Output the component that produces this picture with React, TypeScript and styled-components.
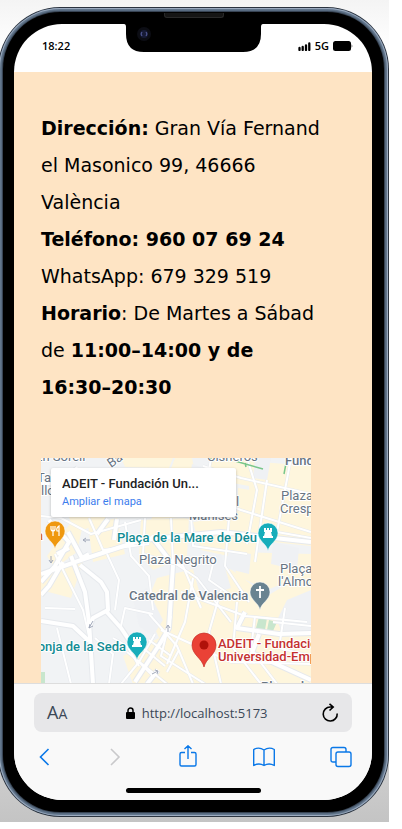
import React from 'react';
import styled, { createGlobalStyle } from 'styled-components';

const GlobalStyle = createGlobalStyle`
  *, *::before, *::after { box-sizing: border-box; }
  body { margin: 0; background: #fff; overflow: hidden; }
`;

const uiFont = `'Open Sans', 'Noto Sans', sans-serif`;

const Stage = styled.div`
  display: flex;
  height: calc(100vh - 7px);
  margin-right: 13px;
  padding: 7px 0 5px;
  overflow: hidden;
  background: linear-gradient(#f4f4f4 0, #fdfdfd 40px, #fff 120px, #fff 500px, #c4c4c4 100%);
`;

const Phone = styled.div`
  display: flex;
  flex: 1;
  min-width: 0;
  margin-left: -2px;
  padding: 1px;
  border-radius: 62px;
  background: #2b3440;
`;

const Chrome = styled.div`
  display: flex;
  flex: 1;
  min-width: 0;
  padding: 4px;
  border-radius: 61px;
  background: #5d7187;
  box-shadow: inset 0 0 1px 1px #a3b2c7;
`;

const Bezel = styled.div`
  position: relative;
  display: flex;
  flex: 1;
  min-width: 0;
  padding: 12px 12px 12px 11px;
  border-radius: 57px;
  background: #000;
  box-shadow: 0 0 1px 1px #35404f;
`;

const Screen = styled.div`
  display: flex;
  flex: 1;
  flex-direction: column;
  min-width: 0;
  overflow: hidden;
  border-radius: 48px;
  background: #fff;
`;

const Speaker = styled.div`
  position: absolute;
  top: 1px;
  left: 50%;
  width: 60px;
  height: 5px;
  margin-left: -30px;
  border: 1px solid #292929;
  border-top: 0;
  border-radius: 0 0 3px 3px;
  background: #151515;
`;

const StatusBar = styled.header`
  display: grid;
  grid-template-columns: 1fr 139px 1fr;
  flex: none;
  height: 48px;
  font: 600 11px/44px ${uiFont};
  color: #000;
`;

const Clock = styled.time`
  padding-left: 28px;
`;

const Notch = styled.svg`
  display: block;
  width: 139px;
  height: 28px;
`;

const Signals = styled.div`
  display: flex;
  align-items: center;
  justify-content: flex-end;
  gap: 4px;
  height: 44px;
  padding-right: 19px;
`;

const Page = styled.main`
  display: flex;
  flex: 1;
  flex-direction: column;
  min-height: 0;
  padding: 38px 61px 0 27px;
  overflow: hidden;
  background: #fee4c4;
`;

const Contact = styled.address`
  flex: none;
  font: normal 19px/37px Verdana, 'DejaVu Sans', sans-serif;
  color: #000;
  white-space: nowrap;
`;

const Line = styled.div``;

const MapPanel = styled.section`
  position: relative;
  flex: 1;
  min-height: 0;
  margin-top: 52px;
  overflow: hidden;
  background: #f2f3f5;
`;

const MapDrawing = styled.svg`
  display: block;
  width: 100%;
  height: 100%;
  font-family: Roboto, sans-serif;
`;

const MapCard = styled.div`
  position: absolute;
  top: 10px;
  left: 10px;
  width: 185px;
  height: 49px;
  padding: 7px 11px;
  border-radius: 2px;
  background: #fff;
  box-shadow: 0 1px 3px rgba(0, 0, 0, 0.25);
  font-family: Roboto, sans-serif;
`;

const CardTitle = styled.div`
  overflow: hidden;
  font-size: 13px;
  font-weight: 500;
  line-height: 18px;
  color: #222;
  white-space: nowrap;
`;

const CardLink = styled.a`
  display: block;
  font-size: 11px;
  line-height: 17px;
  color: #3b7ded;
  text-decoration: none;
`;

const BrowserBar = styled.footer`
  flex: none;
  padding: 9px 20px 7px;
  border-top: 1px solid #ddd;
  background: #f9f9f9;
`;

const AddressBar = styled.div`
  display: flex;
  align-items: center;
  height: 39px;
  padding: 0 13px;
  border-radius: 8px;
  background: #e7e7e9;
  color: #2b3645;
`;

const IconButton = styled.button`
  display: flex;
  align-items: center;
  justify-content: center;
  height: 26px;
  padding: 0;
  border: 0;
  background: none;
  color: #0a78e8;
  &:disabled { color: #c9c9cb; }
`;

const TextSize = styled.button`
  display: flex;
  align-items: baseline;
  padding: 0;
  border: 0;
  background: none;
  font: 400 18px/26px ${uiFont};
  color: #3b4757;
`;

const Small = styled.span`
  font-size: 14px;
`;

const Url = styled.a`
  display: flex;
  flex: 1;
  align-items: center;
  justify-content: center;
  gap: 7px;
  padding-left: 4px;
  font: 400 13px/26px ${uiFont};
  color: #3b4757;
  text-decoration: none;
`;

const Reload = styled(IconButton)`
  color: #000;
`;

const Nav = styled.nav`
  display: flex;
  justify-content: space-between;
  padding: 12px 0 0 2px;
`;

const HomeIndicator = styled.div`
  width: 135px;
  height: 5px;
  margin: 18px auto 0;
  border-radius: 3px;
  background: #000;
`;

const blocks = [
  'M24 48L68 44 64 62 34 76Z', 'M6 98L30 64 42 66 36 94 14 110Z', 'M47 67L76 60 84 96 52 104Z',
  'M80 0L132 0 128 10 84 9Z', 'M134 0L151 0 160 44 147 58 110 62Z',
  'M170 0L270 8V88L210 82 208 28 164 20Z', 'M197 30L222 34 214 104 160 92 152 64 196 58Z',
  'M100 62L148 60 146 98 112 112 98 96Z', 'M116 120L180 104 226 138 270 112V226H92L82 198 118 180 104 148Z',
  'M12 110L42 104 30 140 0 132V116Z', 'M188 94L270 96V114L226 132 196 118Z',
];
const greys = [
  'M151 6L174 14 166 42 155 62 142 60Z', 'M188 92L210 96 208 116 184 110Z',
  'M150 104L180 96 190 130 160 140Z', 'M246 142L270 132V178H242L236 162Z', 'M92 140L106 130 122 162 112 178 98 168Z',
  'M214 0L230 0 226 22 212 20Z', 'M232 84L258 90 256 112 230 106Z',
];
const streets = [
  'M0 58L20 60 50 76 100 62', 'M48 60L62 92 108 86', 'M14 96L42 152 48 178', 'M84 64L90 98 108 118 112 152',
  'M104 60L102 96 142 108 160 150', 'M130 60L132 104 156 120 190 164', 'M150 58L152 88 206 96',
  'M170 0L164 38 200 52 270 74', 'M206 0L216 32 206 86', 'M162 8L200 20 270 36', 'M226 22L214 104',
  'M188 60L184 108 208 144', 'M250 0L236 74 270 80', 'M66 96L78 122 74 152', 'M4 150L34 151',
  'M80 168L84 150 112 156', 'M108 156L136 188 152 226', 'M114 176L98 204 80 226', 'M120 172L190 204 270 206',
  'M140 134L204 158 266 164', 'M152 120L144 164 126 206', 'M180 132L168 174 180 226', 'M196 144L192 190 220 226',
  'M214 158L210 192 236 226', 'M244 150L238 190 270 198', 'M232 164L270 168', 'M130 158L120 198 164 226',
  'M54 180L72 196 68 226', 'M72 180L86 188 98 208', 'M16 170L30 226', 'M86 194L106 210 126 226', 'M174 98L168 122 194 140',
  'M108 182L130 198M102 190L124 208M96 202L112 218M138 192L126 214',
];
const avenues = [
  'M0 116L40 102 101 82 180 74 270 84', 'M8 62L28 84 14 108 0 124', 'M37 10L14 26 0 24',
  'M28 90L16 96M27 74L41 100 48 96', 'M22 104L8 128 0 137', 'M30 98L44 134 48 164 52 226',
  'M39 107L60 124 66 134 67 152 52 160 48 170', 'M0 163L32 168 48 183', 'M64 152L80 170 96 194',
  'M132 107L128 170 120 184 94 224', 'M110 78L130 104M67 61L56 76M76 61L73 82',
  'M117 212L106 226', 'M204 154L196 170 238 176 270 175', 'M218 176L211 195 270 222',
];

type PinProps = { x: number; y: number; color: string; children?: React.ReactNode };
const Pin = ({ x, y, color, children }: PinProps) => (
  <g transform={`translate(${x} ${y})`}>
    <path d="M0 18C-1 11-10 8-10 0A10 10 0 0 1 10 0C10 8 1 11 0 18Z" fill={color} stroke="#fff" strokeWidth=".5" />
    {children}
  </g>
);
const Rook = () => (
  <path d="M-4-5H-2V-3H-1V-5H1V-3H2V-5H4V-1H3L4 3H5V5H-5V3H-4L-3-1H-4Z" fill="#fff" />
);

const CityMap = () => (
  <MapDrawing viewBox="0 0 270 226" preserveAspectRatio="xMinYMin slice" role="img" aria-label="Mapa de Valencia">
    <rect width="270" height="226" fill="#f1f3f5" />
    <g fill="#fef6dd">{blocks.map((d) => <path key={d} d={d} />)}</g>
    <g fill="#eff1f4">{greys.map((d) => <path key={d} d={d} />)}</g>
    <path d="M218 159L226 160 224 172 215 170ZM228 162L236 164 232 173 226 172ZM0 214H4V226H0ZM181 72L186 74 184 80 180 78Z" fill="#c8e6cd" />
    <g fill="none" stroke="#e6e9ed" strokeLinejoin="round">
      {streets.map((d) => <path key={d} d={d} strokeWidth="3" />)}
      {avenues.map((d) => <path key={d} d={d} strokeWidth="6" />)}
    </g>
    <g fill="none" stroke="#fff" strokeLinejoin="round">
      {streets.map((d) => <path key={d} d={d} strokeWidth="2" />)}
      {avenues.map((d) => <path key={d} d={d} strokeWidth="4" />)}
    </g>
    <path d="M194 3L222 11M204 5L205 9M246 0L243 16M170 0L169 3" fill="none" stroke="#79c68b" strokeWidth="1.5" />
    <g fill="none" stroke="#a2a9ba" strokeWidth="1">
      <path d="M42 82H49M42 82L45 80M42 82L45 84M10 98V105M10 105L8 102M10 105L12 102M52 163L48 170M49 166L48 170 52 168M127 174V167L125 170M127 167L129 170M111 216L117 213 114 212M117 213L116 216" />
    </g>
    <g stroke="#fff" strokeWidth="2" paintOrder="stroke" strokeLinejoin="round" fontSize="13" fill="#687583">
      <text x="-6" y="3">En Sorell</text>
      <text x="166" y="3">Cisneros</text>
      <text x="244" y="7" fontWeight="500">Fundación</text>
      <text x="70" y="10" transform="rotate(-35 70 10)">Ba</text>
      <text x="-4" y="24">Tav</text>
      <text x="0" y="37">llop</text>
      <text x="240" y="42">Plaza</text>
      <text x="239" y="55">Crespins</text>
      <text x="148" y="62">Manises</text>
      <text x="195" y="48">l</text>
      <text x="98" y="106">Plaza Negrito</text>
      <text x="239" y="115">Plaça de</text>
      <text x="237" y="128">l'Almoina</text>
      <text x="88" y="142" fontWeight="500">Catedral de Valencia</text>
      <text x="220" y="233" fontWeight="500">Plaça de</text>
      <g fill="#118b93" fontWeight="500">
        <text x="76" y="84">Plaça de la Mare de Déu</text>
        <text x="85" y="193" textAnchor="end">Lonja de la Seda</text>
      </g>
      <text x="-5" y="82" fill="#d66a20" fontWeight="500">a</text>
      <g fill="#c5312f" fontWeight="500">
        <text x="177" y="190">ADEIT - Fundación</text>
        <text x="177" y="203">Universidad-Empresa</text>
      </g>
    </g>
    <Pin x={14} y={73} color="#ef980f">
      <path d="M-4-5V-2Q-4 0-2 0V5M0-5V-2Q0 0-2 0M-2-5V0M4 5V-5Q1-3 2 0H4" fill="none" stroke="#fff" strokeWidth="1.2" />
    </Pin>
    <Pin x={227} y={75} color="#17adba"><Rook /></Pin>
    <Pin x={96} y={184} color="#17adba"><Rook /></Pin>
    <Pin x={219} y={134} color="#698391">
      <path d="M0-6V6M-4-2H4" stroke="#fff" strokeWidth="1.8" />
    </Pin>
    <path d="M163 209C161 200 151 197 151 187A12 12 0 0 1 175 187C175 197 165 200 163 209Z" fill="#ea4236" stroke="#c5302b" strokeWidth=".7" />
    <circle cx="163" cy="187" r="4.5" fill="#b0120a" />
  </MapDrawing>
);

export default function App() {
  return (
    <>
      <GlobalStyle />
      <Stage>
        <Phone>
          <Chrome>
            <Bezel>
              <Speaker />
              <Screen>
                <StatusBar>
                  <Clock>18:22</Clock>
                  <Notch viewBox="0 0 139 28" aria-hidden="true">
                    <path d="M0 0Q2 0 2 3V10Q2 28 20 28H119Q137 28 137 10V3Q137 0 139 0Z" />
                    <circle cx="20" cy="10" r="7" fill="#0c0d14" />
                    <circle cx="20" cy="10" r="4" fill="#171b36" />
                    <path d="M18 8Q16 10 18 12M22 8Q24 10 22 12" fill="none" stroke="#5960a0" />
                  </Notch>
                  <Signals>
                    <svg width="13" height="9" viewBox="0 0 13 9" aria-hidden="true">
                      <path d="M1.5 8V6M4.7 8V5M8 8V3.500M11.300 8V1.500" stroke="#000" strokeWidth="2.300" strokeLinecap="round" />
                    </svg>
                    <span>5G</span>
                    <svg width="20" height="10" viewBox="0 0 20 10" aria-hidden="true">
                      <rect width="18" height="10" rx="2.500" />
                      <path d="M18.700 3Q20 5 18.700 7Z" />
                    </svg>
                  </Signals>
                </StatusBar>
                <Page>
                  <Contact>
                    <Line><b>Dirección:</b> Gran Vía Fernand</Line>
                    <Line>el Masonico 99, 46666</Line>
                    <Line>València</Line>
                    <Line><b>Teléfono: 960 07 69 24</b></Line>
                    <Line>WhatsApp: 679 329 519</Line>
                    <Line><b>Horario</b>: De Martes a Sábad</Line>
                    <Line>de <b>11:00–14:00 y de</b></Line>
                    <Line><b>16:30–20:30</b></Line>
                  </Contact>
                  <MapPanel>
                    <CityMap />
                    <MapCard>
                      <CardTitle>ADEIT - Fundación Un...</CardTitle>
                      <CardLink href="#mapa">Ampliar el mapa</CardLink>
                    </MapCard>
                  </MapPanel>
                </Page>
                <BrowserBar>
                  <AddressBar>
                    <TextSize type="button">A<Small>A</Small></TextSize>
                    <Url href="http://localhost:5173">
                      <svg width="9" height="12" viewBox="0 0 9 12" aria-hidden="true">
                        <rect y="5" width="9" height="7" rx="1" />
                        <path d="M2 6V3.500a2.500 2.500 0 0 1 5 0V6" fill="none" stroke="#000" strokeWidth="1.500" />
                      </svg>
                      http://localhost:5173
                    </Url>
                    <Reload type="button" aria-label="Recargar">
                      <svg width="17" height="20" viewBox="0 0 17 20" fill="none" stroke="currentColor" strokeWidth="1.600">
                        <path d="M15.200 10.500A7 7 0 1 1 8.200 4H11M7.500.800L11.200 4 7.500 7.500" />
                      </svg>
                    </Reload>
                  </AddressBar>
                  <Nav>
                    <IconButton type="button" aria-label="Atrás">
                      <svg width="16" height="22" viewBox="3 0 16 22" fill="none" stroke="currentColor" strokeWidth="1.600"><path d="M15.500 3L7.500 11L15.500 19" /></svg>
                    </IconButton>
                    <IconButton type="button" aria-label="Adelante" disabled>
                      <svg width="16" height="22" viewBox="3 0 16 22" fill="none" stroke="currentColor" strokeWidth="1.600"><path d="M7 3L15 11L7 19" /></svg>
                    </IconButton>
                    <IconButton type="button" aria-label="Compartir">
                      <svg width="20" height="24" viewBox="0 0 20 24" fill="none" stroke="currentColor" strokeWidth="1.400"><path d="M7 7.500H3.500Q2 7.500 2 9V19.500Q2 21 3.500 21H16.500Q18 21 18 19.500V9Q18 7.500 16.500 7.500H13M10 14V1M6.500 4L10 .800 13.500 4" /></svg>
                    </IconButton>
                    <IconButton type="button" aria-label="Marcadores">
                      <svg width="22" height="20" viewBox="0 0 22 20" fill="none" stroke="currentColor" strokeWidth="1.400" strokeLinejoin="round"><path d="M11 3Q6-.500.700 2.500V18.500Q6 15.500 11 18.500Q16 15.500 21.300 18.500V2.500Q16-.500 11 3V18.500" /></svg>
                    </IconButton>
                    <IconButton type="button" aria-label="Pestañas">
                      <svg width="22" height="22" viewBox="0 0 22 22" fill="none" stroke="currentColor" strokeWidth="1.400"><rect x="6" y="6" width="15" height="14.500" rx="2" /><path d="M6 16H3Q1 16 1 14V3.500Q1 1.500 3 1.500H14Q16 1.500 16 3.500V6" /></svg>
                    </IconButton>
                  </Nav>
                  <HomeIndicator />
                </BrowserBar>
              </Screen>
            </Bezel>
          </Chrome>
        </Phone>
      </Stage>
    </>
  );
}
